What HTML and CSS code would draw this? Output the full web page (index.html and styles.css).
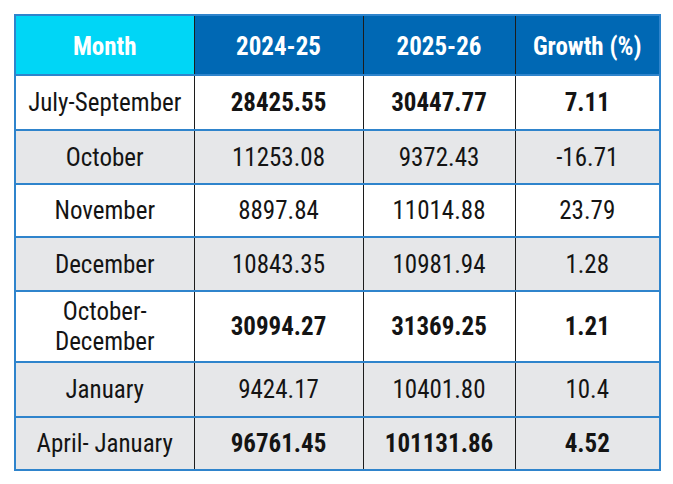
FILE: index.html
```html
<!DOCTYPE html>
<html>
<head>
<meta charset="utf-8">
<link rel="stylesheet" href="styles.css">
</head>
<body>
<div class="wrap">
<table class="data">
  <colgroup>
    <col class="c1"><col class="c2"><col class="c3"><col class="c4">
  </colgroup>
  <thead>
    <tr class="head">
      <th class="h-month">Month</th>
      <th>2024-25</th>
      <th>2025-26</th>
      <th>Growth (%)</th>
    </tr>
  </thead>
  <tbody>
    <tr class="r1 bold"><td class="m">July-September</td><td>28425.55</td><td>30447.77</td><td>7.11</td></tr>
    <tr class="r2 gray"><td class="m">October</td><td>11253.08</td><td>9372.43</td><td>-16.71</td></tr>
    <tr class="r3"><td class="m">November</td><td>8897.84</td><td>11014.88</td><td>23.79</td></tr>
    <tr class="r4 gray"><td class="m">December</td><td>10843.35</td><td>10981.94</td><td>1.28</td></tr>
    <tr class="r5 bold"><td class="m two">October-<br>December</td><td>30994.27</td><td>31369.25</td><td>1.21</td></tr>
    <tr class="r6 gray"><td class="m">January</td><td>9424.17</td><td>10401.80</td><td>10.4</td></tr>
    <tr class="r7 gray bold"><td class="m">April- January</td><td>96761.45</td><td>101131.86</td><td>4.52</td></tr>
  </tbody>
</table>
</div>
</body>
</html>
```
FILE: styles.css
```css
html, body {
  margin: 0;
  padding: 0;
  background: #ffffff;
}
.wrap {
  padding: 14px 0 0 14px;
}
.data {
  border-collapse: collapse;
  width: 645px;
  table-layout: fixed;
  border: 2px solid #2f84cc;
  font-family: "Liberation Sans Narrow", "Roboto Condensed", "Arial Narrow", "DejaVu Sans Condensed", "Liberation Sans", sans-serif;
  font-size: 25px;
  color: #141414;
}
.c1 { width: 179px; }
.c2 { width: 169px; }
.c3 { width: 152px; }
.c4 { width: 145px; }
.data th,
.data td {
  text-align: center;
  vertical-align: middle;
  padding: 0;
  border-left: 1px solid #1c1c1c;
  border-right: 1px solid #1c1c1c;
  border-top: 2px solid #2f84cc;
  border-bottom: 2px solid #2f84cc;
}
.data th {
  background: #0068b4;
  color: #ffffff;
  font-weight: bold;
  padding-top: 2px;
}
.data th.h-month {
  background: #00d6f6;
}
.head { height: 60px; }
.r1 { height: 55px; }
.r2 { height: 54px; }
.r3 { height: 53px; }
.r4 { height: 54px; }
.r5 { height: 71px; }
.r6 { height: 55px; }
.r7 { height: 53px; }
.gray td { background: #e6e7e9; }
.bold td { font-weight: bold; }
.bold td.m { font-weight: normal; }
.two { line-height: 30px; }
```
